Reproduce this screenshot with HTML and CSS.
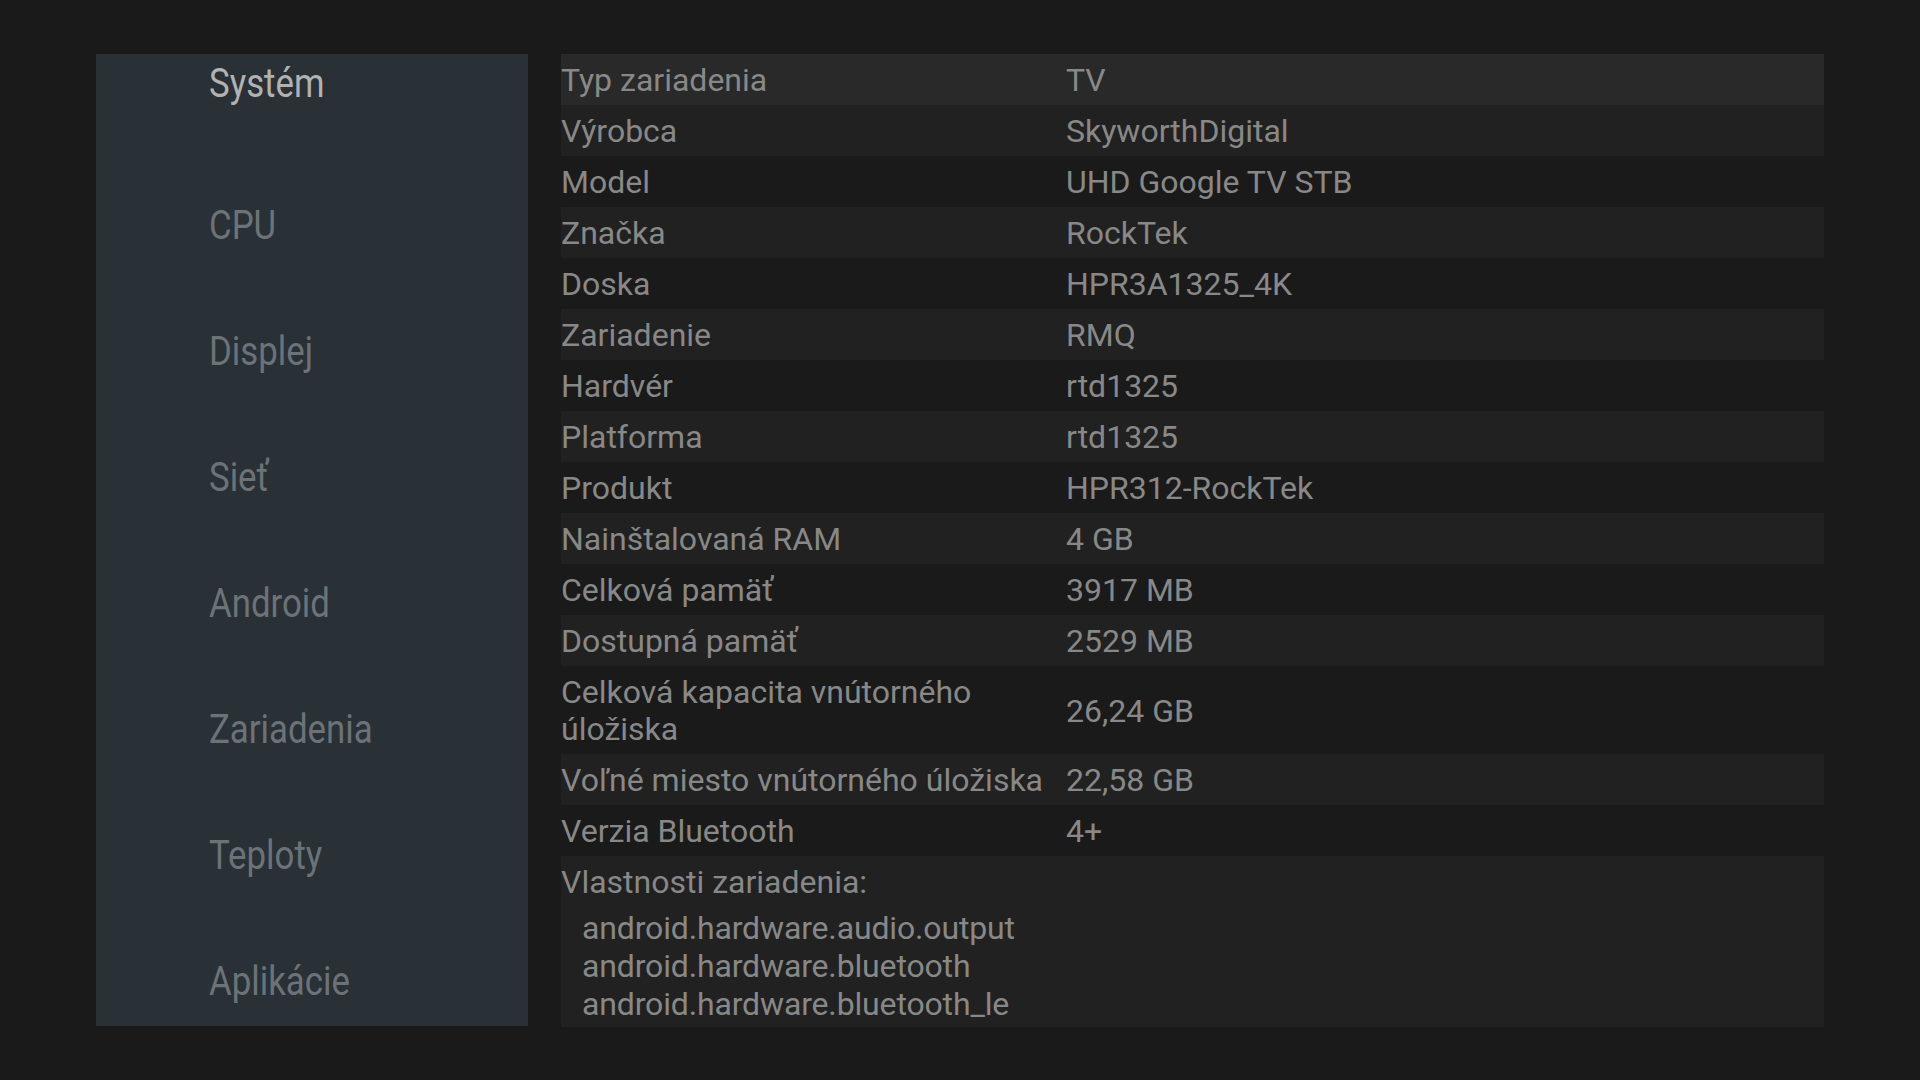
FILE: index.html
```html
<!DOCTYPE html>
<html lang="sk">
<head>
<meta charset="utf-8">
<title>Systém</title>
<link rel="stylesheet" href="styles.css">
</head>
<body>
<div class="screen">
  <nav class="sidebar">
    <div class="nav-item active"><span class="nav-label">Systém</span></div>
    <div class="nav-item"><span class="nav-label">CPU</span></div>
    <div class="nav-item"><span class="nav-label">Displej</span></div>
    <div class="nav-item"><span class="nav-label">Sieť</span></div>
    <div class="nav-item"><span class="nav-label">Android</span></div>
    <div class="nav-item"><span class="nav-label">Zariadenia</span></div>
    <div class="nav-item"><span class="nav-label">Teploty</span></div>
    <div class="nav-item"><span class="nav-label">Aplikácie</span></div>
  </nav>
  <main class="info">
    <div class="row head"><div class="label">Typ zariadenia</div><div class="value">TV</div></div>
    <div class="row alt"><div class="label">Výrobca</div><div class="value">SkyworthDigital</div></div>
    <div class="row"><div class="label">Model</div><div class="value">UHD Google TV STB</div></div>
    <div class="row alt"><div class="label">Značka</div><div class="value">RockTek</div></div>
    <div class="row"><div class="label">Doska</div><div class="value">HPR3A1325_4K</div></div>
    <div class="row alt"><div class="label">Zariadenie</div><div class="value">RMQ</div></div>
    <div class="row"><div class="label">Hardvér</div><div class="value">rtd1325</div></div>
    <div class="row alt"><div class="label">Platforma</div><div class="value">rtd1325</div></div>
    <div class="row"><div class="label">Produkt</div><div class="value">HPR312-RockTek</div></div>
    <div class="row alt"><div class="label">Nainštalovaná RAM</div><div class="value">4 GB</div></div>
    <div class="row"><div class="label">Celková pamäť</div><div class="value">3917 MB</div></div>
    <div class="row alt"><div class="label">Dostupná pamäť</div><div class="value">2529 MB</div></div>
    <div class="row"><div class="label">Celková kapacita vnútorného úložiska</div><div class="value">26,24 GB</div></div>
    <div class="row alt"><div class="label">Voľné miesto vnútorného úložiska</div><div class="value">22,58 GB</div></div>
    <div class="row"><div class="label">Verzia Bluetooth</div><div class="value">4+</div></div>
    <div class="features alt">
      <div class="features-title">Vlastnosti zariadenia:</div>
      <ul class="feature-list">
        <li>android.hardware.audio.output</li>
        <li>android.hardware.bluetooth</li>
        <li>android.hardware.bluetooth_le</li>
      </ul>
    </div>
  </main>
</div>
</body>
</html>
```
FILE: styles.css
```css
html, body {
  margin: 0;
  padding: 0;
  background: #1a1a1a;
}

body {
  width: 1920px;
  height: 1080px;
  overflow: hidden;
  font-family: Roboto, "Noto Sans", sans-serif;
  color: #888888;
}

.screen {
  display: flex;
  align-items: flex-start;
  gap: 33px;
  padding: 54px 96px 54px 96px;
  height: 1080px;
  box-sizing: border-box;
}

.sidebar {
  flex: 0 0 432px;
  height: 972px;
  background: #293036;
  overflow: hidden;
  display: flex;
  flex-direction: column;
  padding-left: 113px;
  box-sizing: border-box;
}

.nav-item {
  flex: 0 0 126px;
  height: 126px;
  display: flex;
  align-items: center;
  font-size: 40px;
  line-height: normal;
  color: #6c7378;
}

.nav-item.active {
  flex: 0 0 108px;
  height: 108px;
  align-items: flex-start;
  padding-top: 6px;
  box-sizing: border-box;
  color: #b2b2b2;
}

.nav-label {
  display: inline-block;
  transform: scaleX(0.87);
  transform-origin: left center;
  white-space: nowrap;
}

.info {
  flex: 1 1 auto;
  display: flex;
  flex-direction: column;
  height: 972px;
}

.row {
  display: grid;
  grid-template-columns: 505px 1fr;
  align-items: center;
  padding: 8px 0 6px 0;
  font-size: 32px;
  line-height: 37px;
}

.row.head {
  background: #292929;
}

.alt {
  background: #212121;
}

.label,
.value {
  padding-left: 0;
}

.features {
  flex: 1 1 auto;
  padding: 8px 0 4px 0;
  font-size: 32px;
  line-height: 37px;
}

.feature-list {
  list-style: none;
  margin: 8px 0 0 0;
  padding: 0 0 0 21px;
  line-height: 38px;
  letter-spacing: -0.15px;
}
```
